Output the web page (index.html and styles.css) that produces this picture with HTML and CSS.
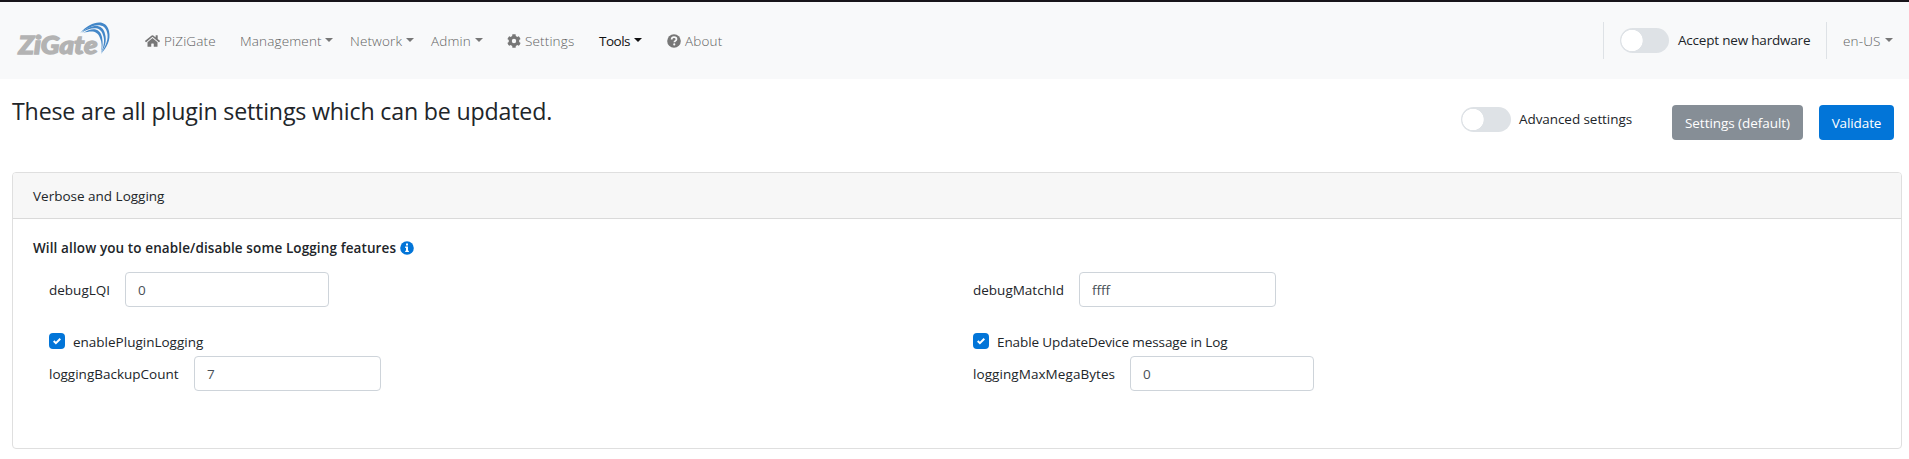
FILE: index.html
```
<!DOCTYPE html>
<html lang="en">
<head>
<meta charset="utf-8">
<title>ZiGate settings</title>
<link rel="stylesheet" href="styles.css">
</head>
<body>
<header class="navbar">
  <a class="brand">
    <svg width="96" height="38" viewBox="0 0 96 38">
      <text class="brand-text" x="1.500" y="32" textLength="79" lengthAdjust="spacingAndGlyphs">ZiGate</text>
      <g fill="#4387c8">
        <path d="M63 11C74-1 89-4 92 9C94 18 90 25 84 32C89 23 92 17 90 10C87-1 74 3 63 11Z"/>
        <path d="M64 11C74 2 86 1 88 12C90 19 88 25 84 31C87 24 88 18 86 13C83 3 73 6 64 11Z"/>
        <path d="M66 11C75 5 83 6 85 15C86 21 86 25 84 30C85 25 85 20 83 16C80 8 74 9 66 11Z"/>
      </g>
    </svg>
  </a>
  <nav class="nav">
    <a class="link home"><svg class="ico home-ico" viewBox="0 0 576 512"><path d="M280 148L96 300v164a16 16 0 0 0 16 16h112a16 16 0 0 0 16-16v-96a16 16 0 0 1 16-16h64a16 16 0 0 1 16 16v96a16 16 0 0 0 16 16h112a16 16 0 0 0 16-16V300L296 148a12 12 0 0 0-16 0zM572 251l-84-69V44a12 12 0 0 0-12-12h-56a12 12 0 0 0-12 12v73l-90-74a48 48 0 0 0-61 0L4 251a12 12 0 0 0-2 17l26 31a12 12 0 0 0 17 2L280 107a12 12 0 0 1 15 0l236 194a12 12 0 0 0 17-2l25-31a12 12 0 0 0-1-17z"/></svg><span class="t-home">PiZiGate</span></a>
    <a class="link management caret"><span>Management</span></a>
    <a class="link network caret"><span>Network</span></a>
    <a class="link admin caret"><span>Admin</span></a>
    <a class="link settings"><svg class="ico" viewBox="0 0 512 512"><path d="M487 316l-43-25a192 192 0 0 0 0-70l43-25a12 12 0 0 0 6-14 249 249 0 0 0-55-95 12 12 0 0 0-15-2l-43 25a192 192 0 0 0-61-35V25a12 12 0 0 0-9-12 252 252 0 0 0-109 0 12 12 0 0 0-10 12v50a192 192 0 0 0-61 35L88 85a12 12 0 0 0-15 2 249 249 0 0 0-55 95 12 12 0 0 0 6 14l43 25a192 192 0 0 0 0 70l-43 25a12 12 0 0 0-6 14 249 249 0 0 0 55 95 12 12 0 0 0 15 2l43-25a192 192 0 0 0 61 35v50a12 12 0 0 0 9 12 252 252 0 0 0 109 0 12 12 0 0 0 10-12v-50a192 192 0 0 0 61-35l43 25a12 12 0 0 0 15-2 249 249 0 0 0 55-95 12 12 0 0 0-7-14zM256 336a80 80 0 1 1 0-160 80 80 0 0 1 0 160z"/></svg><span>Settings</span></a>
    <a class="link tools caret"><span>Tools</span></a>
    <a class="link about"><svg class="ico" viewBox="0 0 16 16"><circle cx="8" cy="8" r="7.8"/><path class="cut" d="M5.3 6.2C5.4 4.4 6.5 3.7 8 3.7c1.700 0 2.800.9 2.800 2.200 0 1.900-2.400 1.900-2.400 3.500"/><circle class="cut-dot" cx="8.300" cy="11.900" r="1.200"/></svg><span>About</span></a>
  </nav>
  <div class="nav-right">
    <div class="accept"><i class="switch"></i><span class="t-accept">Accept new hardware</span></div>
    <a class="link lang caret"><span>en-US</span></a>
  </div>
</header>
<main>
  <div class="toolbar">
    <h1>These are all plugin settings which can be updated.</h1>
    <div class="advanced"><i class="switch"></i><span class="t-advanced">Advanced settings</span></div>
    <button class="btn secondary"><span>Settings (default)</span></button>
    <button class="btn primary"><span>Validate</span></button>
  </div>
  <section class="card">
    <div class="card-head"><span class="t-verbose">Verbose and Logging</span></div>
    <div class="card-body">
      <h2><span>Will allow you to enable/disable some Logging features</span><svg width="14" height="14" viewBox="0 0 14 14"><circle cx="7" cy="7" r="6.8" fill="#0275d8"/><path fill="#fff" d="M6 2.500h2v2H6zM5.200 5.600H8V9.700h.9V11H5.200V9.700H6V6.900h-.8z"/></svg></h2>
      <div class="grid">
        <div class="field f-lqi"><label>debugLQI</label><input value="0"></div>
        <div class="field f-match"><label>debugMatchId</label><input value="ffff"></div>
        <div class="check c-plugin"><i class="box"><svg viewBox="0 0 8 8"><path d="M6.600 1 2.900 4.700 1.400 3.200 0 4.700l2.900 2.900L8 2.500z"/></svg></i><span>enablePluginLogging</span></div>
        <div class="check c-update"><i class="box"><svg viewBox="0 0 8 8"><path d="M6.600 1 2.900 4.700 1.400 3.200 0 4.700l2.900 2.900L8 2.500z"/></svg></i><span>Enable UpdateDevice message in Log</span></div>
        <div class="field f-backup"><label>loggingBackupCount</label><input value="7"></div>
        <div class="field f-mega"><label>loggingMaxMegaBytes</label><input value="0"></div>
      </div>
    </div>
  </section>
</main>
</body>
</html>
```
FILE: styles.css
```
* { box-sizing: border-box; }
body {
  margin: 0;
  background: #fff;
  color: #212529;
  font: 13.5px/21px "Open Sans", "Noto Sans", sans-serif;
  white-space: nowrap;
  overflow: hidden;
}
.navbar {
  display: flex;
  height: 79px;
  border-top: 2px solid #17151a;
  background: #f8f9fa;
  padding: 20px 16px 20px 17px;
}
.brand { width: 128px; flex: none; }
.brand svg { display: block; overflow: visible; }
.brand-text {
  font: italic 900 24px Lato, sans-serif;
  fill: #b3b3b3;
  stroke: #b3b3b3;
  stroke-width: 1.3px;
}
.nav { display: flex; height: 37px; }
.link {
  display: flex;
  align-items: center;
  flex: none;
  height: 39px;
  color: #626363;
  font-weight: 300;
  letter-spacing: .15px;
}
.link span { flex: none; }
.home { width: 95px; }
.management { width: 110px; }
.network { width: 81px; }
.admin { width: 76px; }
.settings { width: 92px; }
.tools { width: 68px; color: #111; font-weight: 400; letter-spacing: -.5px; }
.management span { width: 82px; }
.network span { width: 53px; }
.admin span { width: 41px; }
.tools span { width: 32px; }
.lang span { width: 39px; }
.caret::after {
  content: "";
  margin: 0 0 3px 3px;
  border: 4.2px solid transparent;
  border-top-color: #777;
  border-bottom: 0;
}
.tools::after { border-top-color: #111; }
.ico { width: 14px; height: 14px; margin: 0 4px 2px 0; fill: #777; }
.home-ico { width: 15px; height: 14px; }
.cut { fill: none; stroke: #f8f9fa; stroke-width: 2; }
.cut-dot { fill: #f8f9fa; }
.nav-right { display: flex; margin-left: auto; height: 37px; }
.accept {
  display: flex;
  align-items: center;
  width: 224px;
  padding-left: 16px;
  border-left: 1px solid #dee2e6;
  border-right: 1px solid #dee2e6;
}
.t-accept { letter-spacing: -.2px; }
.t-advanced { letter-spacing: -.07px; }
.lang { padding-left: 16px; width: 66px; }
.switch {
  flex: none;
  width: 49px;
  height: 25px;
  margin-right: 9px;
  border-radius: 13px;
  background: radial-gradient(circle at 12px 12.5px, #fff 10.3px, #dee2e6 11px);
}
main { padding: 0 7px 0 12px; }
.toolbar { display: flex; height: 93px; padding: 26px 8px 0 0; }
h1 {
  flex: none;
  width: 1449px;
  height: 28px;
  margin: -8px 0 0;
  font-size: 23.2px;
  line-height: 28px;
  font-weight: 400;
  letter-spacing: -.18px;
}
.advanced { display: flex; align-items: center; width: 211px; height: 29px; }
.advanced .switch { width: 50px; margin-right: 8px; }
.btn {
  height: 35px;
  padding: 1px 0 0;
  border: 0;
  border-radius: 4px;
  color: #fff;
  font: 13.5px/21px "Open Sans", "Noto Sans", sans-serif;
}
.secondary { width: 131px; background: #868e96; letter-spacing: -.05px; }
.primary { width: 75px; margin-left: 16px; background: #0275d8; letter-spacing: -.1px; }
.card {
  height: 277px;
  border: 1px solid #dfdfdf;
  border-radius: 4px;
}
.card-head {
  height: 46px;
  padding: 13px 20px 0;
  border-bottom: 1px solid #dadada;
  background: #f7f7f7;
  border-radius: 3px 3px 0 0;
}
.card-body { padding: 19px 20px 0; }
h2 { display: flex; align-items: center; margin: 0; font-size: 13.5px; line-height: 21px; font-weight: 600; letter-spacing: .11px; }
h2 span { width: 367px; }
h2 svg { margin-bottom: 2px; }
.grid {
  display: grid;
  grid-template-columns: 924px 1fr;
  grid-template-rows: 61px 23px 35px;
  padding: 13px 0 0 16px;
}
.field { display: flex; align-items: center; height: 35px; }
.field label { flex: none; padding-top: 1px; }
.field input {
  height: 35px;
  border: 1px solid #ced4da;
  border-radius: 4px;
  padding: 1px 12px 0;
  color: #495057;
  font: 13.5px/21px "Open Sans", "Noto Sans", sans-serif;
}
.f-lqi label { width: 76px; }
.f-lqi input { width: 204px; }
.f-match label { width: 106px; }
.f-match input { width: 197px; }
.f-backup label { width: 145px; }
.f-backup input { width: 187px; }
.f-mega label { width: 157px; letter-spacing: .07px; }
.f-mega input { width: 184px; }
.check { display: flex; align-items: flex-start; }
.check span { line-height: 19px; }
.c-update span { letter-spacing: -.1px; }
.box {
  display: flex;
  align-items: center;
  justify-content: center;
  width: 16px;
  height: 16px;
  margin-right: 8px;
  border-radius: 4px;
  background: #0275d8;
}
.box svg { width: 8px; height: 8px; fill: #fff; }
```
